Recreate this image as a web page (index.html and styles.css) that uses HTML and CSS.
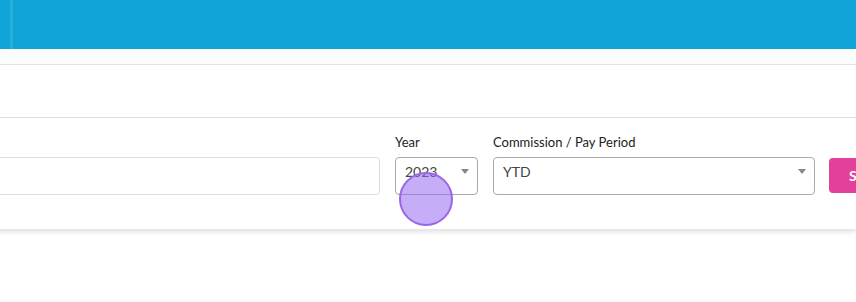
FILE: index.html
```html
<!DOCTYPE html>
<html lang="en">
<head>
  <meta charset="UTF-8">
  <meta name="viewport" content="width=device-width, initial-scale=1.0">
  <title>Commissions</title>
  <link rel="stylesheet" href="styles.css">
</head>
<body>
  <header class="topbar"><div class="topbar-edge"></div></header>
  <div class="subbar"></div>

  <section class="card">
    <form class="filters">
      <div class="field field-search">
        <label class="field-label">&nbsp;</label>
        <input class="input" type="text">
      </div>
      <div class="field field-year">
        <label class="field-label">Year</label>
        <div class="select"><span>2023</span><span class="caret"></span></div>
      </div>
      <div class="field field-period">
        <label class="field-label">Commission / Pay Period</label>
        <div class="select"><span>YTD</span><span class="caret"></span></div>
      </div>
      <div class="field field-action">
        <label class="field-label">&nbsp;</label>
        <button type="button" class="btn-search">Search</button>
      </div>
    </form>
    <div class="click-dot"></div>
  </section>
</body>
</html>
```

FILE: styles.css
```css
body {
  margin: 0;
  font-family: Lato, 'Open Sans', sans-serif;
  background: #fff;
  color: #222;
  overflow: hidden;
  width: 856px;
  height: 302px;
}

.topbar {
  height: 49px;
  background: #0fa4d7;
  position: relative;
}

.topbar-edge {
  width: 3px;
  height: 49px;
  margin-left: 10px;
  background: #27aedc;
}

.subbar {
  height: 15px;
  background: #fdfcfc;
  border-bottom: 1px solid #e6dfe3;
}

.card {
  position: relative;
  margin-top: 52px;
  margin-left: -40px;
  border-top: 1px solid #dedede;
  background: #fff;
  padding: 15px 0 34px;
  box-shadow: 0 3px 5px rgba(0, 0, 0, 0.12);
}

.filters {
  display: flex;
  align-items: flex-end;
}

.field {
  display: flex;
  flex-direction: column;
  flex-shrink: 0;
}

.field-label {
  font-size: 13px;
  line-height: 18px;
  height: 18px;
  margin-bottom: 6px;
  color: #222;
}

.field-search { width: 420px; }
.field-year { width: 83px; margin-left: 15px; }
.field-period { width: 322px; margin-left: 15px; }
.field-action { margin-left: 14px; }

.input {
  box-sizing: border-box;
  height: 38px;
  width: 100%;
  border: 1px solid #dcdcdc;
  border-radius: 4px;
  font: inherit;
}

.select {
  box-sizing: border-box;
  height: 38px;
  border: 1px solid #a9a9a9;
  border-radius: 4px;
  display: flex;
  align-items: center;
  justify-content: space-between;
  padding: 0 8px 10px 9px;
  font-size: 14px;
  color: #444;
}

.caret {
  width: 0;
  height: 0;
  border-left: 4px solid transparent;
  border-right: 4px solid transparent;
  border-top: 5px solid #888;
}

.btn-search {
  height: 35px;
  margin-bottom: 2px;
  padding: 0 20px;
  border: 0;
  border-radius: 4px;
  background: #e2409b;
  color: #fff;
  font-family: Lato, sans-serif;
  font-weight: 700;
  font-size: 14px;
  white-space: nowrap;
}

.click-dot {
  position: absolute;
  left: 439px;
  top: 54px;
  width: 50px;
  height: 50px;
  border-radius: 50%;
  background: rgba(150, 105, 240, 0.55);
  border: 2px solid #9a66e2;
}
```
